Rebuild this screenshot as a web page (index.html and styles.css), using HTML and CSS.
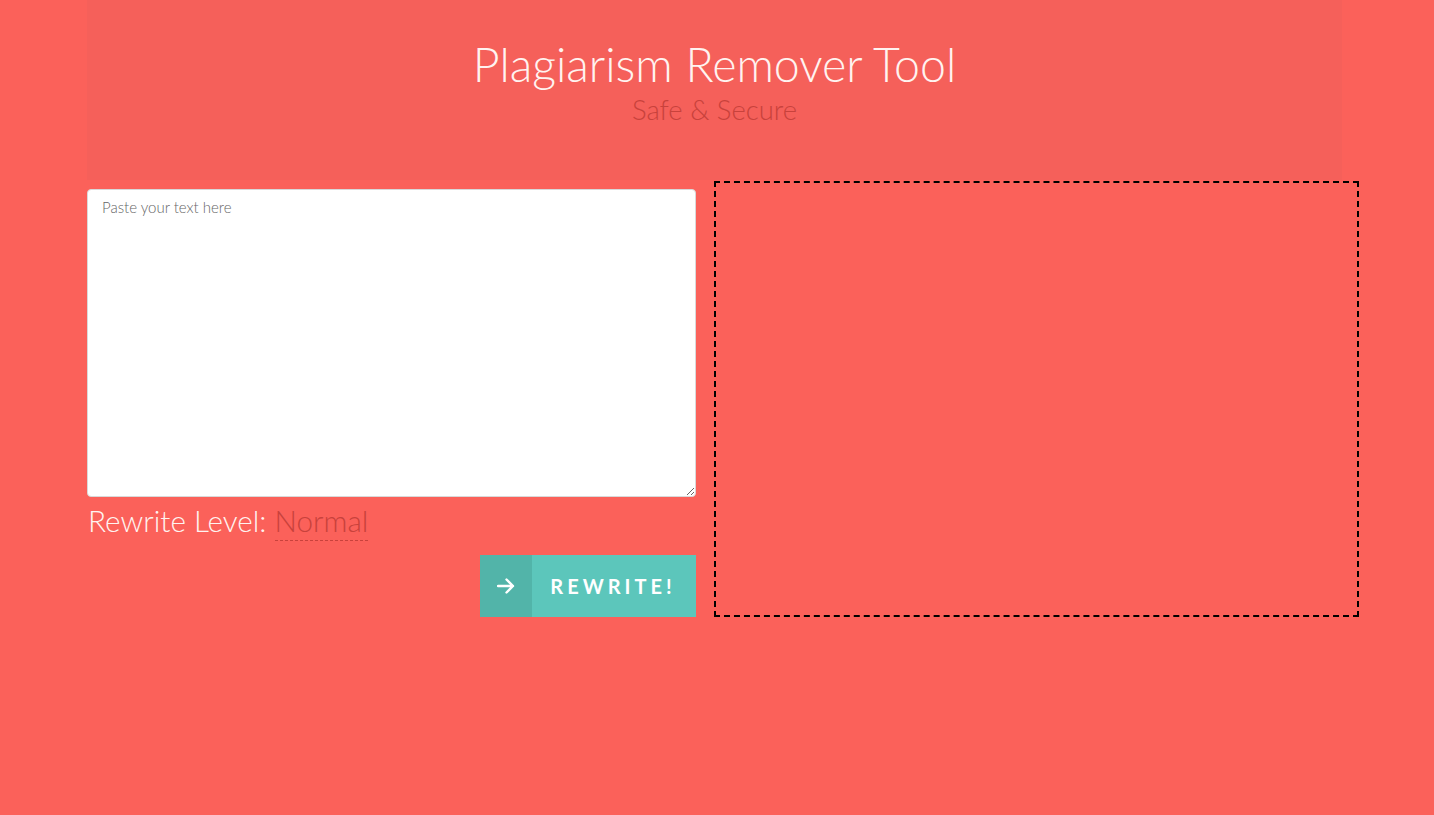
FILE: index.html
```html
<!DOCTYPE html>
<html>
<head>
<meta charset="utf-8">
<link rel="stylesheet" href="styles.css">
</head>
<body>
<header class="hero">
  <h1 class="title">Plagiarism Remover Tool</h1>
  <p class="subtitle">Safe &amp; Secure</p>
</header>
<main class="tool">
  <section class="input-col">
    <textarea class="input" placeholder="Paste your text here"></textarea>
    <div class="level">Rewrite Level: <span class="level-value">Normal</span></div>
    <div class="actions">
      <button class="btn">
        <span class="btn-icon">
          <svg width="18" height="16" viewBox="0 0 18 16"><path d="M1 8H16M9.5 1.5L16 8L9.5 14.5" fill="none" stroke="#fff" stroke-width="2.4" stroke-linecap="round" stroke-linejoin="round"/></svg>
        </span>
        <span class="btn-label">REWRITE!</span>
      </button>
    </div>
  </section>
  <section class="output"></section>
</main>
</body>
</html>
```

FILE: styles.css
```css
html, body {
  margin: 0;
  padding: 0;
}
body {
  background: #fb615a;
  font-family: Lato, "Open Sans", sans-serif;
  font-weight: 300;
  min-height: 815px;
}
.hero {
  margin-left: 87px;
  width: 1255px;
  height: 180px;
  background: #f5605a;
  text-align: center;
  padding-top: 35px;
  box-sizing: border-box;
}
.title {
  margin: 0;
  font-weight: 300;
  font-size: 46.5px;
  line-height: 58px;
  color: #fff3f0;
}
.subtitle {
  margin: 0;
  font-size: 27.5px;
  line-height: 34px;
  color: #c8423c;
}
.tool {
  display: flex;
  align-items: flex-start;
  margin-left: 87px;
  margin-top: 1px;
  gap: 18px;
}
.input-col {
  width: 609px;
  padding-top: 8px;
  display: flex;
  flex-direction: column;
}
.input {
  width: 609px;
  height: 308px;
  box-sizing: border-box;
  border: 1px solid #d9d9d9;
  border-radius: 4px;
  padding: 8px 14px;
  font-family: Lato, sans-serif;
  font-weight: 300;
  font-size: 15px;
  background: #fff;
  resize: vertical;
  margin: 0;
  display: block;
}
.input::placeholder {
  color: #666;
}
.level {
  font-size: 29.7px;
  line-height: 36px;
  color: #fff3f0;
  margin-top: 6px;
  padding-left: 1px;
}
.level-value {
  color: #c8423c;
  border-bottom: 1px dashed #c8423c;
  padding-bottom: 2px;
}
.actions {
  display: flex;
  justify-content: flex-end;
  margin-top: 16px;
}
.btn {
  display: flex;
  align-items: stretch;
  height: 62px;
  padding: 0;
  border: 0;
  background: #5cc6bb;
  cursor: pointer;
  font-family: Lato, sans-serif;
}
.btn-icon {
  width: 52px;
  background: #52b4a9;
  display: flex;
  align-items: center;
  justify-content: center;
}
.btn-label {
  width: 162px;
  display: flex;
  align-items: center;
  justify-content: center;
  color: #fff;
  font-weight: 700;
  font-size: 20px;
  letter-spacing: 4px;
  padding-right: 2px;
}
.output {
  width: 645px;
  height: 436px;
  box-sizing: border-box;
  border: 2px dashed #000;
}
```
